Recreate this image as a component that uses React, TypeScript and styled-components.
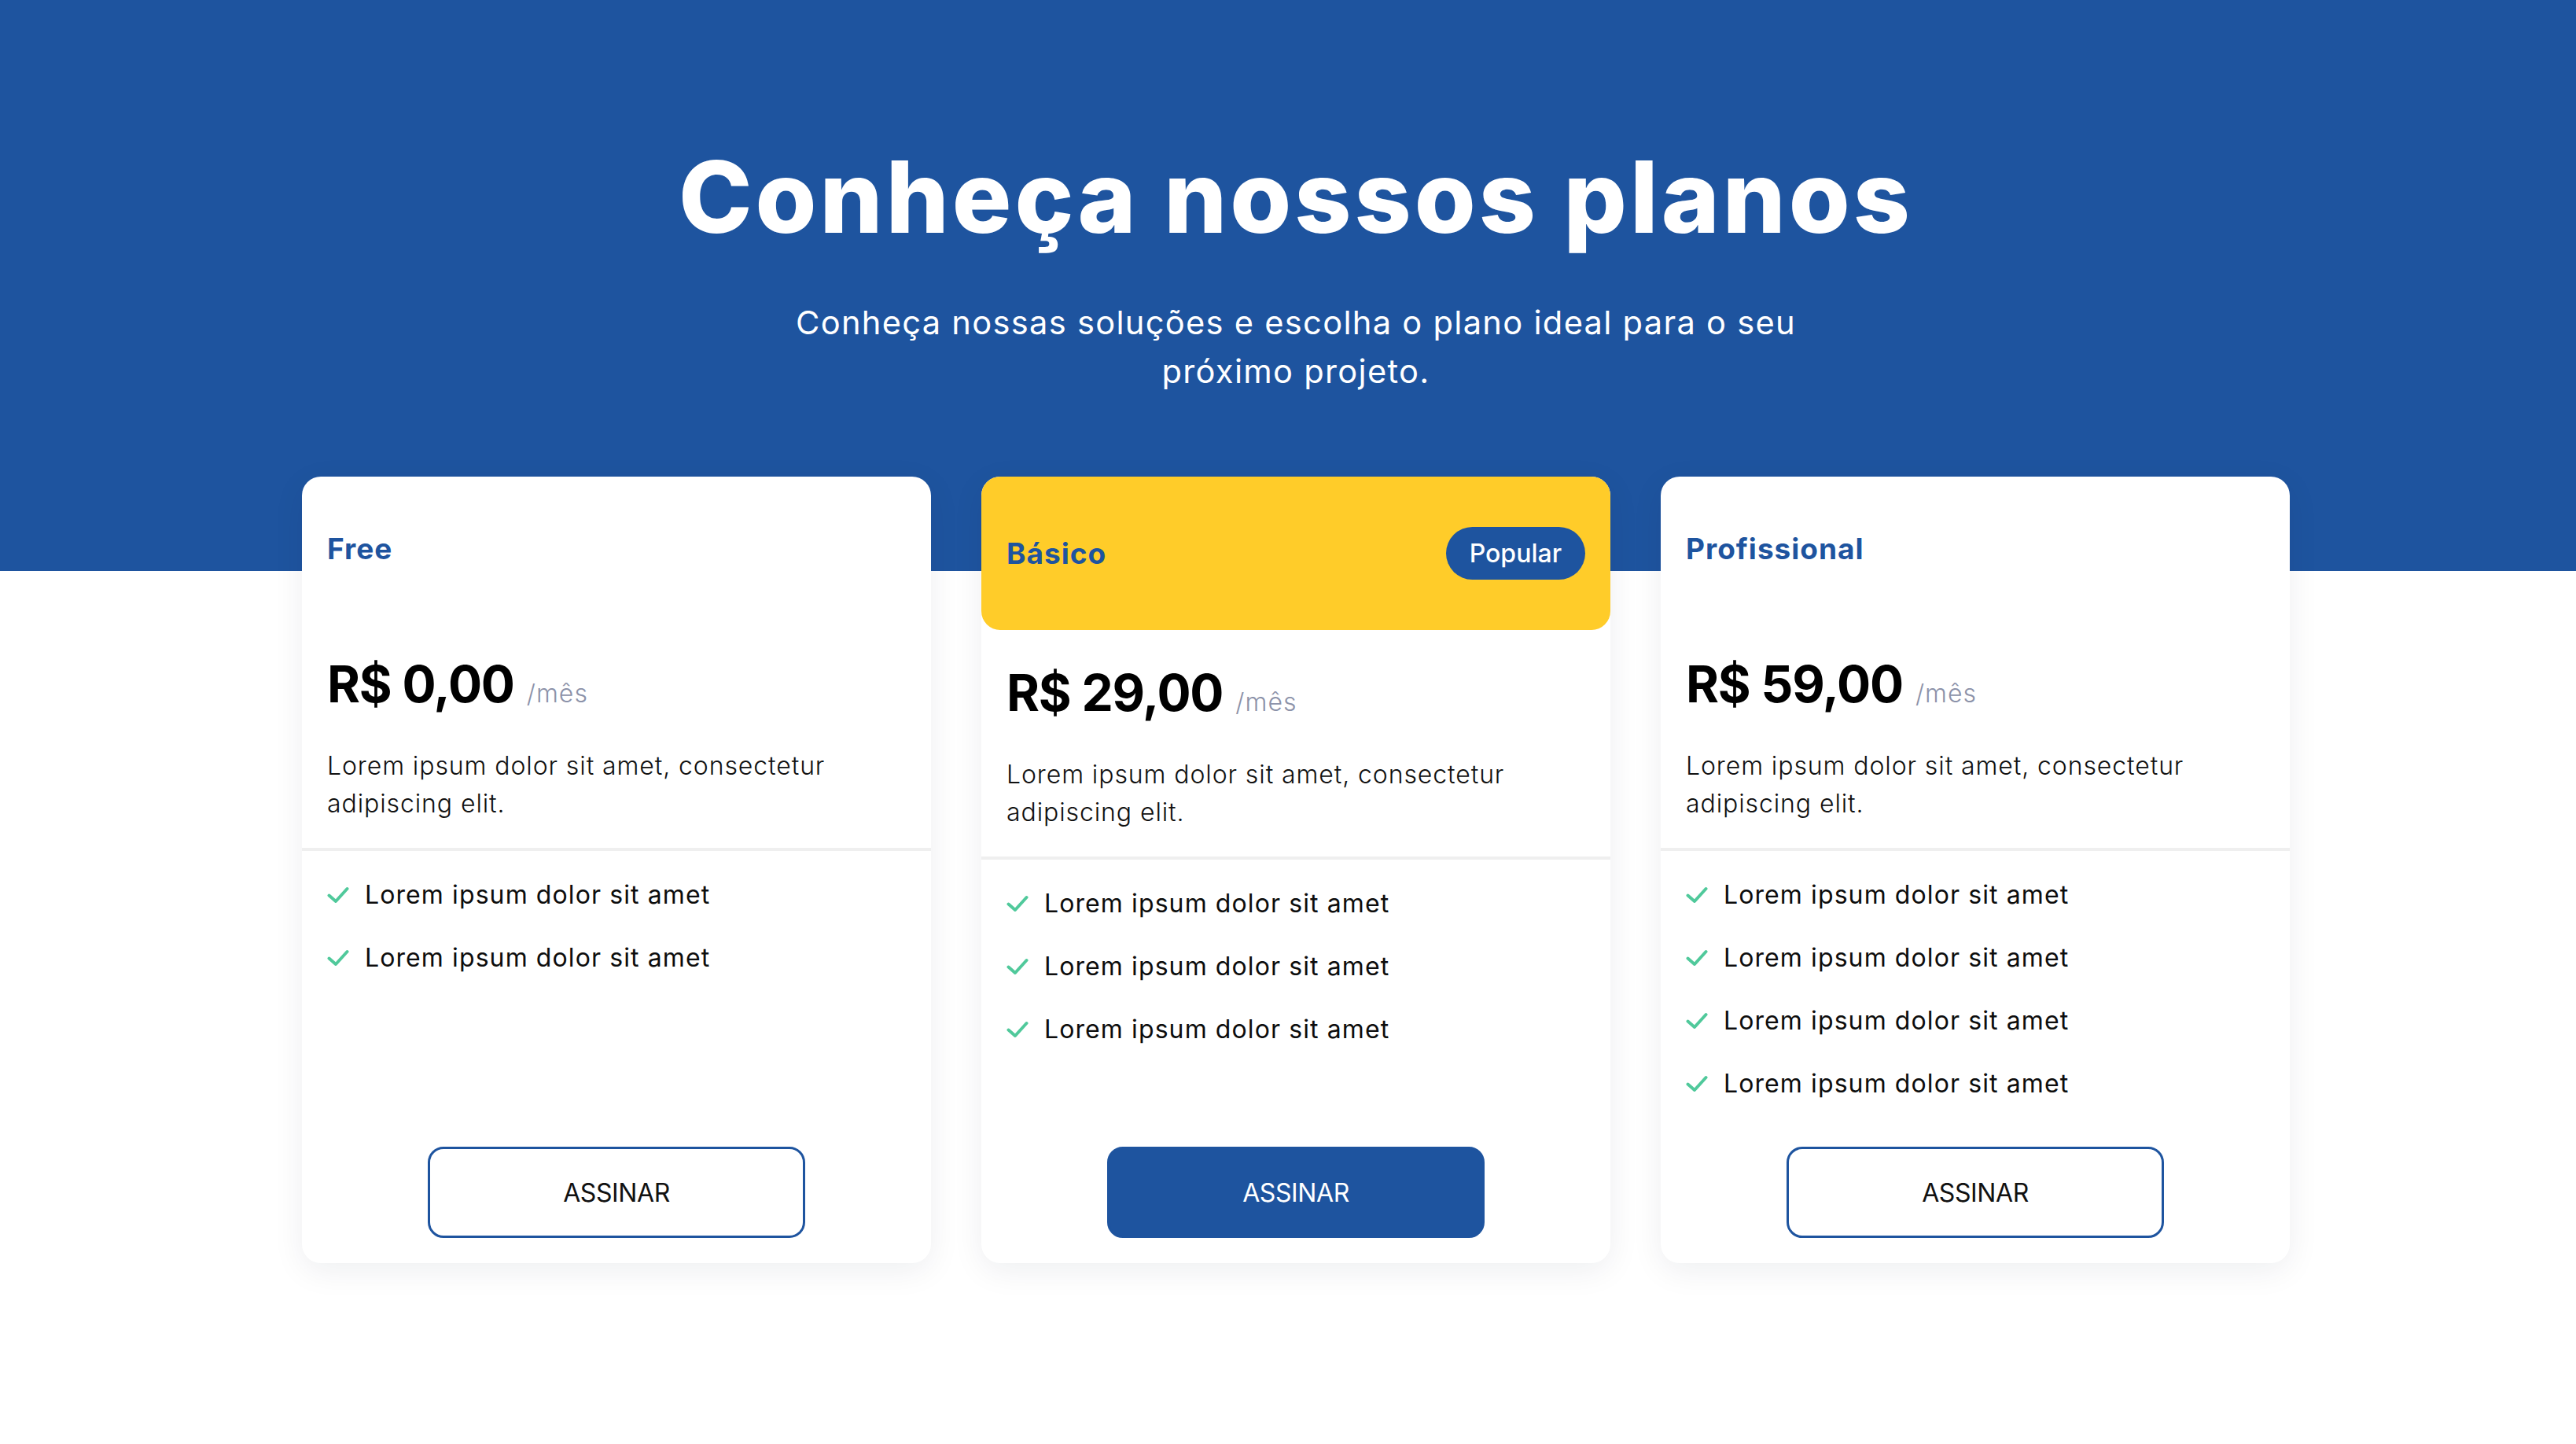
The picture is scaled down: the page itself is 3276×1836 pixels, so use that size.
import React from "react";
import styled, { createGlobalStyle } from "styled-components";

const BLUE = "#1E549F";
const YELLOW = "#FFCC29";
const GREEN = "#50C99B";

const GlobalStyle = createGlobalStyle`
  * { box-sizing: border-box; }
  html, body { margin: 0; padding: 0; background: #ffffff; }
  body {
    font-family: "Inter", "Noto Sans", sans-serif;
    color: #111111;
    -webkit-font-smoothing: antialiased;
  }
`;

const Page = styled.main`
  min-height: 1836px;
  background: #ffffff;
`;

const Hero = styled.section`
  background: ${BLUE};
  padding: 175px 0 223px 20px;
  display: flex;
  flex-direction: column;
  align-items: center;
`;

const Title = styled.h1`
  margin: 0;
  font-size: 126px;
  line-height: 150px;
  font-weight: 800;
  letter-spacing: 4px;
  color: #ffffff;
`;

const Subtitle = styled.p`
  margin: 54px 0 0;
  max-width: 1340px;
  font-size: 41.6px;
  line-height: 62px;
  font-weight: 400;
  letter-spacing: 1.3px;
  color: #ffffff;
  text-align: center;
`;

const Plans = styled.section`
  display: flex;
  justify-content: center;
  align-items: stretch;
  gap: 64px;
  margin-top: -120px;
  padding: 0 0 100px 20px;
`;

const Card = styled.article`
  width: 800px;
  background: #ffffff;
  border-radius: 24px;
  box-shadow: 0 10px 40px rgba(20, 30, 60, 0.07);
  display: flex;
  flex-direction: column;
`;

const CardHeader = styled.header<{ $highlight?: boolean }>`
  display: flex;
  align-items: center;
  justify-content: space-between;
  padding: 64px 32px;
  border-radius: 24px;
  background: ${(p) => (p.$highlight ? YELLOW : "transparent")};
`;

const PlanName = styled.h2`
  margin: 0;
  font-size: 37px;
  line-height: 56px;
  font-weight: 700;
  letter-spacing: 1px;
  color: ${BLUE};
`;

const Badge = styled.span`
  height: 67px;
  display: inline-flex;
  align-items: center;
  padding: 0 30px;
  border-radius: 34px;
  background: ${BLUE};
  color: #ffffff;
  font-size: 32px;
  font-weight: 500;
`;

const PriceBlock = styled.div`
  padding: 32px;
  border-bottom: 4px solid #efefef;
`;

const PriceRow = styled.div`
  display: flex;
  align-items: baseline;
  gap: 16px;
`;

const Price = styled.span`
  font-size: 64px;
  line-height: 96px;
  font-weight: 700;
  letter-spacing: -1.2px;
  color: #000000;
`;

const Period = styled.span`
  font-size: 32px;
  line-height: 48px;
  font-weight: 300;
  letter-spacing: 1px;
  color: #8c92a9;
`;

const Description = styled.p`
  margin: 32px 0 0;
  max-width: 680px;
  font-size: 32px;
  line-height: 48px;
  font-weight: 300;
  letter-spacing: 0.9px;
  color: #111111;
`;

const Features = styled.ul`
  list-style: none;
  margin: 0;
  padding: 32px 32px 56px;
  display: flex;
  flex-direction: column;
  gap: 32px;
`;

const Feature = styled.li`
  display: flex;
  align-items: center;
  gap: 20px;
  font-size: 32px;
  line-height: 48px;
  font-weight: 400;
  letter-spacing: 1.1px;
  color: #0d0d0d;
`;

const CheckIcon = styled.svg`
  width: 28px;
  height: 22px;
  flex: none;
`;

const Footer = styled.div`
  margin-top: auto;
  padding: 0 32px 32px;
  display: flex;
  justify-content: center;
`;

const Button = styled.button<{ $primary?: boolean }>`
  width: 480px;
  height: 116px;
  border-radius: 20px;
  border: 3px solid ${BLUE};
  background: ${(p) => (p.$primary ? BLUE : "#ffffff")};
  color: ${(p) => (p.$primary ? "#ffffff" : "#111111")};
  font-family: inherit;
  font-size: 32px;
  font-weight: 400;
  letter-spacing: -0.4px;
  cursor: pointer;
`;

const Check = () => (
  <CheckIcon viewBox="0 0 28 22" fill="none">
    <path
      d="M2.5 11.5 L11 19 L25.5 3"
      stroke={GREEN}
      strokeWidth="4"
      strokeLinecap="round"
      strokeLinejoin="round"
    />
  </CheckIcon>
);

type Plan = {
  name: string;
  price: string;
  features: number;
  popular?: boolean;
};

const plans: Plan[] = [
  { name: "Free", price: "R$ 0,00", features: 2 },
  { name: "Básico", price: "R$ 29,00", features: 3, popular: true },
  { name: "Profissional", price: "R$ 59,00", features: 4 },
];

export default function App() {
  return (
    <Page>
      <GlobalStyle />
      <Hero>
        <Title>Conheça nossos planos</Title>
        <Subtitle>
          Conheça nossas soluções e escolha o plano ideal para o seu próximo projeto.
        </Subtitle>
      </Hero>
      <Plans>
        {plans.map((plan) => (
          <Card key={plan.name}>
            <CardHeader $highlight={plan.popular}>
              <PlanName>{plan.name}</PlanName>
              {plan.popular && <Badge>Popular</Badge>}
            </CardHeader>
            <PriceBlock>
              <PriceRow>
                <Price>{plan.price}</Price>
                <Period>/mês</Period>
              </PriceRow>
              <Description>
                Lorem ipsum dolor sit amet, consectetur adipiscing elit.
              </Description>
            </PriceBlock>
            <Features>
              {Array.from({ length: plan.features }).map((_, i) => (
                <Feature key={i}>
                  <Check />
                  Lorem ipsum dolor sit amet
                </Feature>
              ))}
            </Features>
            <Footer>
              <Button $primary={plan.popular}>ASSINAR</Button>
            </Footer>
          </Card>
        ))}
      </Plans>
    </Page>
  );
}
